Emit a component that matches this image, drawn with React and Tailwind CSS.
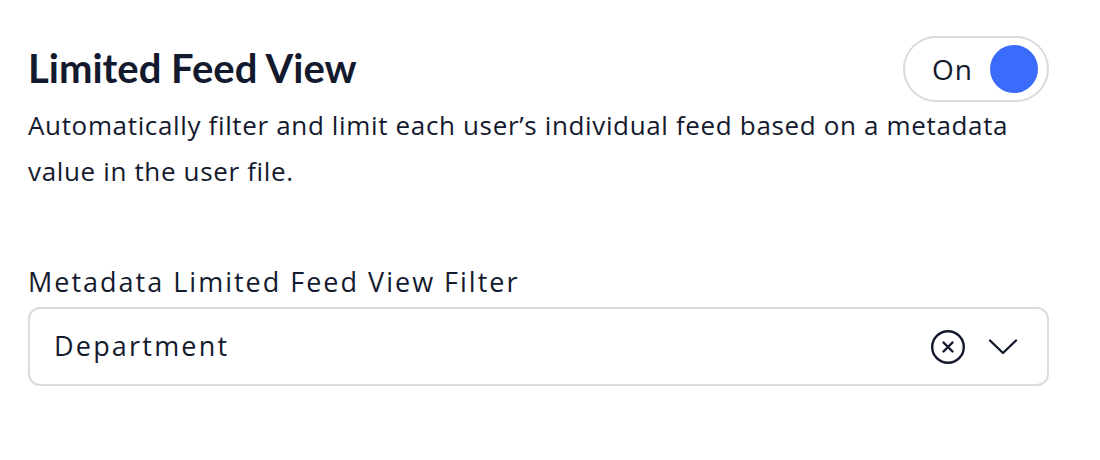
import React from "react";

export default function App() {
  return (
    <div className="w-[1100px] h-[460px] bg-white text-[#141a2e]" style={{ fontFamily: "'Open Sans', 'Noto Sans', sans-serif" }}>
      <div className="pl-[28px] pr-[51px] pt-[36px]">
        <div className="flex items-center justify-between">
          <h1 className="text-[40px] font-bold leading-none mt-[-2px]" style={{ fontFamily: "Lato, sans-serif" }}>Limited Feed View</h1>
          <div className="w-[146px] h-[66px] rounded-full border-2 border-[#d8dbe0] flex items-center justify-between pl-[27px] pr-[9px]">
            <span className="text-[28px] leading-none tracking-[1px]">On</span>
            <span className="w-[48px] h-[48px] rounded-full bg-[#3b6bfa]" />
          </div>
        </div>
        <p className="text-[26px] leading-[46px] tracking-[0.65px] mt-[0px] w-[1020px]">
          Automatically filter and limit each user’s individual feed based on a metadata value in the user file.
        </p>
        <div className="mt-[74px] text-[27px] leading-none tracking-[2px]">Metadata Limited Feed View Filter</div>
        <div className="mt-[12px] h-[79px] rounded-[12px] border-2 border-[#d8dbe0] flex items-center justify-between pl-[24px] pr-[29px]">
          <span className="text-[27px] tracking-[2.2px]">Department</span>
          <div className="flex items-center gap-[22px]">
            <svg width="36" height="36" viewBox="0 0 36 36" fill="none" stroke="#141a2e" strokeWidth="2.4" strokeLinecap="round">
              <circle cx="18" cy="18" r="15.8" />
              <path d="M13.5 13.5 L22.5 22.5 M22.5 13.5 L13.5 22.5" />
            </svg>
            <svg width="30" height="18" viewBox="0 0 30 18" fill="none" stroke="#141a2e" strokeWidth="2.4" strokeLinecap="round" strokeLinejoin="round">
              <path d="M2 2.5 L15 15 L28 2.5" />
            </svg>
          </div>
        </div>
      </div>
    </div>
  );
}
